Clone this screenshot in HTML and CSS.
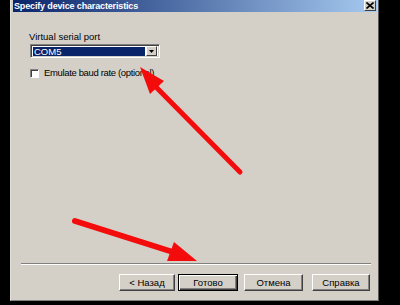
FILE: index.html
```html
<!DOCTYPE html>
<html lang="en">
<head>
  <meta charset="UTF-8">
  <title>Specify device characteristics</title>
  <link rel="stylesheet" href="styles.css">
</head>
<body>
  <div class="dialog">
    <div class="titlebar">
      <span class="title">Specify device characteristics</span>
      <span class="close-btn">
        <svg width="8" height="7" viewBox="0 0 8 7">
          <path d="M0.5 0.5 L7.5 6.5 M7.5 0.5 L0.5 6.5" stroke="#000" stroke-width="1.6"/>
        </svg>
      </span>
    </div>

    <div class="content">
      <div class="field-label">Virtual serial port</div>
      <div class="combo">
        <div class="combo-value">COM5</div>
        <div class="combo-btn">
          <svg width="5" height="3" viewBox="0 0 5 3"><path d="M0 0 H5 L2.5 3 Z" fill="#000"/></svg>
        </div>
      </div>

      <label class="check-row">
        <span class="checkbox"></span>
        <span class="check-text">Emulate baud rate (optional)</span>
      </label>
    </div>

    <div class="footer">
      <div class="separator"></div>
      <div class="buttons">
        <span class="btn btn-back">&lt; Назад</span>
        <span class="btn btn-default">Готово</span>
        <span class="btn btn-cancel">Отмена</span>
        <span class="btn btn-help">Справка</span>
      </div>
    </div>
  </div>

  <!-- red arrows drawn over the screenshot -->
  <svg class="arrows" width="400" height="305" viewBox="0 0 400 305">
    <line x1="240" y1="172" x2="153" y2="84" stroke="#f40c0c" stroke-width="5" stroke-linecap="round"/>
    <polygon points="140,67 164,81 150,94" fill="#f40c0c"/>
    <line x1="75" y1="221" x2="176" y2="253" stroke="#f40c0c" stroke-width="6" stroke-linecap="round"/>
    <polygon points="197,261 174,242 167,261" fill="#f40c0c"/>
  </svg>
</body>
</html>
```

FILE: styles.css
```css
body {
  margin: 0;
  width: 400px;
  height: 305px;
  overflow: hidden;
  background: #000;
  font-family: 'Liberation Sans', Arial, sans-serif;
  position: relative;
}

.dialog {
  margin-left: 10px;
  width: 369px;
  height: 301px;
  box-sizing: border-box;
  background: #d4d0c8;
  border-left: 1px solid #e4e2dc;
  border-bottom: 1px solid #808080;
  border-right: 1px solid #5a5a5a;
  display: flex;
  flex-direction: column;
}

.titlebar {
  height: 12px;
  margin: 0 1px 0 2px;
  background: linear-gradient(to right, #0a246a, #a6caf0);
  display: flex;
  align-items: center;
  justify-content: space-between;
}

.title {
  color: #fff;
  font-weight: bold;
  font-size: 9px;
  letter-spacing: -0.15px;
  padding-left: 1px;
  line-height: 12px;
}

.close-btn {
  width: 12px;
  height: 11px;
  margin-right: 1px;
  align-self: flex-start;
  box-sizing: border-box;
  background: #d4d0c8;
  border-top: 1px solid #fff;
  border-left: 1px solid #fff;
  border-right: 1px solid #404040;
  border-bottom: 1px solid #404040;
  display: flex;
  align-items: center;
  justify-content: center;
}

.content {
  padding-left: 18px;
  font-size: 9.5px;
  color: #000;
}

.field-label {
  margin-top: 19px;
  line-height: 11px;
}

.combo {
  margin-top: 2px;
  margin-left: 1px;
  width: 130px;
  height: 14px;
  box-sizing: border-box;
  background: #fff;
  border-top: 1px solid #808080;
  border-left: 1px solid #808080;
  border-right: 1px solid #fff;
  border-bottom: 1px solid #fff;
  box-shadow: inset 1px 1px 0 #404040, inset -1px -1px 0 #d4d0c8;
  display: flex;
  padding: 2px 2px 1px 2px;
}

.combo-value {
  flex: 1;
  background: #0a246a;
  color: #fff;
  line-height: 10px;
  padding-left: 1px;
  margin-right: 1px;
}

.combo-btn {
  width: 11px;
  margin-top: -1px;
  box-sizing: border-box;
  background: #d4d0c8;
  border-top: 1px solid #fff;
  border-left: 1px solid #fff;
  border-right: 1px solid #404040;
  border-bottom: 1px solid #404040;
  display: flex;
  align-items: center;
  justify-content: center;
}

.check-row {
  margin-top: 10px;
  margin-left: 1px;
  display: flex;
  align-items: center;
  gap: 5px;
  line-height: 10px;
}

.check-text {
  letter-spacing: -0.35px;
}

.checkbox {
  width: 9px;
  height: 9px;
  box-sizing: border-box;
  background: #fff;
  border-top: 1px solid #808080;
  border-left: 1px solid #808080;
  border-right: 1px solid #fff;
  border-bottom: 1px solid #fff;
  box-shadow: inset 1px 1px 0 #404040;
}

.footer {
  margin-top: auto;
  padding-bottom: 9px;
}

.separator {
  margin-left: 10px;
  width: 350px;
  height: 1px;
  background: #808080;
  border-bottom: 1px solid #fff;
}

.buttons {
  margin-top: 9px;
  display: flex;
  padding-left: 108px;
}

.btn {
  height: 17px;
  box-sizing: border-box;
  background: #d4d0c8;
  border-top: 1px solid #fff;
  border-left: 1px solid #fff;
  border-right: 1px solid #404040;
  border-bottom: 1px solid #404040;
  box-shadow: inset -1px -1px 0 #808080;
  font-size: 9.5px;
  color: #000;
  display: flex;
  align-items: center;
  justify-content: center;
}

.btn-back {
  width: 56px;
}

.btn-default {
  width: 60px;
  margin-left: 3px;
  border: 1px solid #000;
  box-shadow: inset 1px 1px 0 #fff, inset -1px -1px 0 #404040, inset -2px -2px 0 #808080;
}

.btn-cancel {
  width: 59px;
  margin-left: 6px;
}

.btn-help {
  width: 58px;
  margin-left: 9px;
}

.arrows {
  position: absolute;
  left: 0;
  top: 0;
  pointer-events: none;
}
```
